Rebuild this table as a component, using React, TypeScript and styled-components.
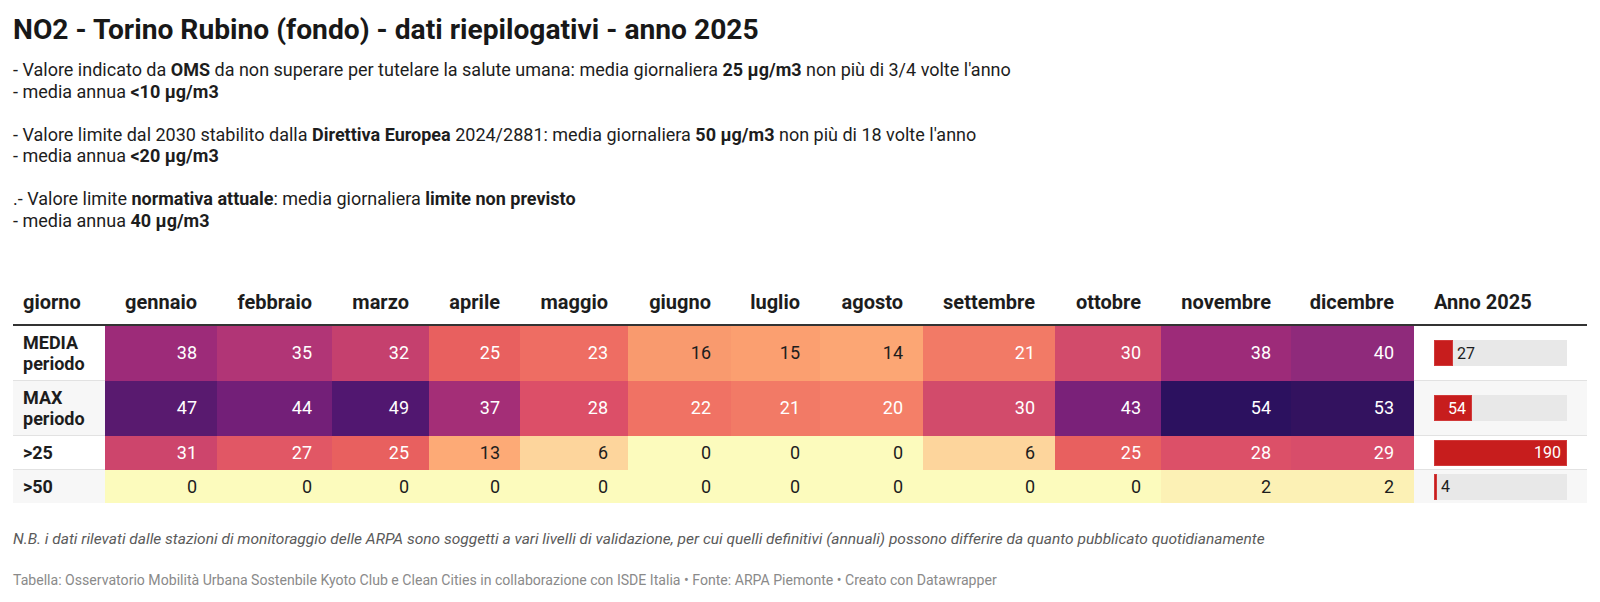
import React from 'react';
import styled, { createGlobalStyle } from 'styled-components';

const GlobalStyle = createGlobalStyle`
  body {
    margin: 0;
    background: #ffffff;
    font-family: Roboto, "Liberation Sans", Arial, sans-serif;
    color: #1d1d1d;
  }
`;

const Page = styled.div`
  padding: 13px 13px 0 13px;
  width: 1574px;
`;

const Title = styled.h1`
  margin: 0;
  font-size: 28.2px;
  line-height: 34px;
  font-weight: 700;
  color: #181818;
`;

const Description = styled.div`
  margin-top: 12px;
  font-size: 18px;
  line-height: 21.5px;
  color: #1d1d1d;
`;

const Para = styled.p`
  margin: 0 0 21.5px 0;
  &:last-child {
    margin-bottom: 0;
  }
  b {
    font-weight: 700;
  }
`;

const Table = styled.table`
  margin-top: 51px;
  width: 1574px;
  border-collapse: collapse;
  table-layout: fixed;
`;

const HeadCell = styled.th<{ $left?: boolean }>`
  font-size: 20px;
  line-height: 24px;
  font-weight: 700;
  color: #1d1d1d;
  text-align: ${p => (p.$left ? 'left' : 'right')};
  padding: 8px 20px 10px ${p => (p.$left ? '10px' : '0')};
  border-bottom: 2px solid #333333;
  white-space: nowrap;
`;

const BarHeadCell = styled(HeadCell)`
  padding-left: 20px;
`;

const Row = styled.tr<{ $alt: boolean; $last: boolean }>`
  background: ${p => (p.$alt ? '#f7f7f7' : '#ffffff')};
  td {
    border-bottom: ${p => (p.$last ? 'none' : '1px solid #e2e2e2')};
  }
`;

const LabelCell = styled.td`
  font-size: 18px;
  line-height: 21px;
  font-weight: 700;
  color: #1d1d1d;
  padding: 6px 8px 6px 10px;
  vertical-align: middle;
`;

const HeatCell = styled.td<{ $bg: string; $light: boolean }>`
  background: ${p => p.$bg};
  color: ${p => (p.$light ? '#ffffff' : '#1d1d1d')};
  font-size: 18px;
  line-height: 20px;
  text-align: right;
  padding: 6.5px 20px 6.5px 0;
  vertical-align: middle;
  font-variant-numeric: tabular-nums;
  && {
    border-bottom-color: ${p => p.$bg};
  }
`;

const BarCell = styled.td`
  padding: 3.5px 20px;
  vertical-align: middle;
`;

const Track = styled.div`
  display: flex;
  align-items: stretch;
  width: 133px;
  height: 26px;
  background: #e8e8e8;
`;

const Fill = styled.div<{ $inside: boolean }>`
  background: #c71d1d;
  box-shadow: inset 0 0 0 1px #d13a3a;
  display: flex;
  align-items: center;
  justify-content: flex-end;
  padding-right: ${p => (p.$inside ? '6px' : '0')};
  box-sizing: border-box;
  color: #ffffff;
  font-size: 16px;
  flex: none;
`;

const OutsideLabel = styled.span`
  display: flex;
  align-items: center;
  padding-left: 4px;
  font-size: 16px;
  color: #1d1d1d;
`;

const Note = styled.p`
  margin: 26px 0 0 0;
  font-size: 15.5px;
  line-height: 20px;
  font-style: italic;
  color: #5a5a5a;
`;

const Source = styled.p`
  margin: 21px 0 0 0;
  font-size: 14.1px;
  line-height: 20px;
  color: #8a8a8a;
`;

const months = [
  'gennaio', 'febbraio', 'marzo', 'aprile', 'maggio', 'giugno',
  'luglio', 'agosto', 'settembre', 'ottobre', 'novembre', 'dicembre',
];

const colWidths = [92, 112, 115, 97, 91, 108, 103, 89, 103, 132, 106, 130, 123, 173];

type Cell = [number, string];

interface DataRow {
  label: string[];
  cells: Cell[];
  total: number;
}

const rows: DataRow[] = [
  {
    label: ['MEDIA', 'periodo'],
    cells: [
      [38, '#9d2b79'], [35, '#b13576'], [32, '#c5406e'], [25, '#e8605f'],
      [23, '#ee6d63'], [16, '#f99a6e'], [15, '#fb9f70'], [14, '#fca674'],
      [21, '#f27a66'], [30, '#d24b6b'], [38, '#9d2b79'], [40, '#8f2a7b'],
    ],
    total: 27,
  },
  {
    label: ['MAX', 'periodo'],
    cells: [
      [47, '#591a6f'], [44, '#731f78'], [49, '#511770'], [37, '#a42e77'],
      [28, '#dc4f68'], [22, '#f07264'], [21, '#f27a66'], [20, '#f47f68'],
      [30, '#d24b6b'], [43, '#7a2179'], [54, '#2c115f'], [53, '#33125f'],
    ],
    total: 54,
  },
  {
    label: ['>25'],
    cells: [
      [31, '#cd456c'], [27, '#e15765'], [25, '#e8605f'], [13, '#fdaa76'],
      [6, '#fdd59c'], [0, '#fcfbbd'], [0, '#fcfbbd'], [0, '#fcfbbd'],
      [6, '#fdd59c'], [25, '#e8605f'], [28, '#dc5068'], [29, '#d84d6a'],
    ],
    total: 190,
  },
  {
    label: ['>50'],
    cells: [
      [0, '#fcfbbd'], [0, '#fcfbbd'], [0, '#fcfbbd'], [0, '#fcfbbd'],
      [0, '#fcfbbd'], [0, '#fcfbbd'], [0, '#fcfbbd'], [0, '#fcfbbd'],
      [0, '#fcfbbd'], [0, '#fcfbbd'], [2, '#fcf1b5'], [2, '#fcf1b5'],
    ],
    total: 4,
  },
];

const maxTotal = 190;
const trackWidth = 133;

const TotalBar: React.FC<{ value: number }> = ({ value }) => {
  const width = Math.max(2, Math.round((value / maxTotal) * trackWidth));
  const inside = width > 30;
  return (
    <Track>
      <Fill $inside={inside} style={{ width }}>
        {inside ? value : null}
      </Fill>
      {!inside && <OutsideLabel>{value}</OutsideLabel>}
    </Track>
  );
};

export default function App() {
  return (
    <Page>
      <GlobalStyle />
      <Title>NO2 - Torino Rubino (fondo) - dati riepilogativi - anno 2025</Title>
      <Description>
        <Para>
          - Valore indicato da <b>OMS</b> da non superare per tutelare la salute umana: media giornaliera{' '}
          <b>25 µg/m3</b> non più di 3/4 volte l'anno
          <br />- media annua <b>&lt;10 µg/m3</b>
        </Para>
        <Para>
          - Valore limite dal 2030 stabilito dalla <b>Direttiva Europea</b> 2024/2881: media giornaliera{' '}
          <b>50 µg/m3</b> non più di 18 volte l'anno
          <br />- media annua <b>&lt;20 µg/m3</b>
        </Para>
        <Para>
          .- Valore limite <b>normativa attuale</b>: media giornaliera <b>limite non previsto</b>
          <br />- media annua <b>40 µg/m3</b>
        </Para>
      </Description>

      <Table>
        <colgroup>
          {colWidths.map((w, i) => (
            <col key={i} style={{ width: w }} />
          ))}
        </colgroup>
        <thead>
          <tr>
            <HeadCell $left>giorno</HeadCell>
            {months.map(m => (
              <HeadCell key={m}>{m}</HeadCell>
            ))}
            <BarHeadCell $left>Anno 2025</BarHeadCell>
          </tr>
        </thead>
        <tbody>
          {rows.map((r, i) => (
            <Row key={i} $alt={i % 2 === 1} $last={i === rows.length - 1}>
              <LabelCell>
                {r.label.map((l, j) => (
                  <React.Fragment key={j}>
                    {j > 0 && <br />}
                    {l}
                  </React.Fragment>
                ))}
              </LabelCell>
              {r.cells.map(([v, bg], j) => (
                <HeatCell key={j} $bg={bg} $light={v >= 19}>
                  {v}
                </HeatCell>
              ))}
              <BarCell>
                <TotalBar value={r.total} />
              </BarCell>
            </Row>
          ))}
        </tbody>
      </Table>

      <Note>
        N.B. i dati rilevati dalle stazioni di monitoraggio delle ARPA sono soggetti a vari livelli di validazione, per cui quelli definitivi (annuali) possono differire da quanto pubblicato quotidianamente
      </Note>
      <Source>
        Tabella: Osservatorio Mobilità Urbana Sostenbile Kyoto Club e Clean Cities in collaborazione con ISDE Italia • Fonte: ARPA Piemonte • Creato con Datawrapper
      </Source>
    </Page>
  );
}
